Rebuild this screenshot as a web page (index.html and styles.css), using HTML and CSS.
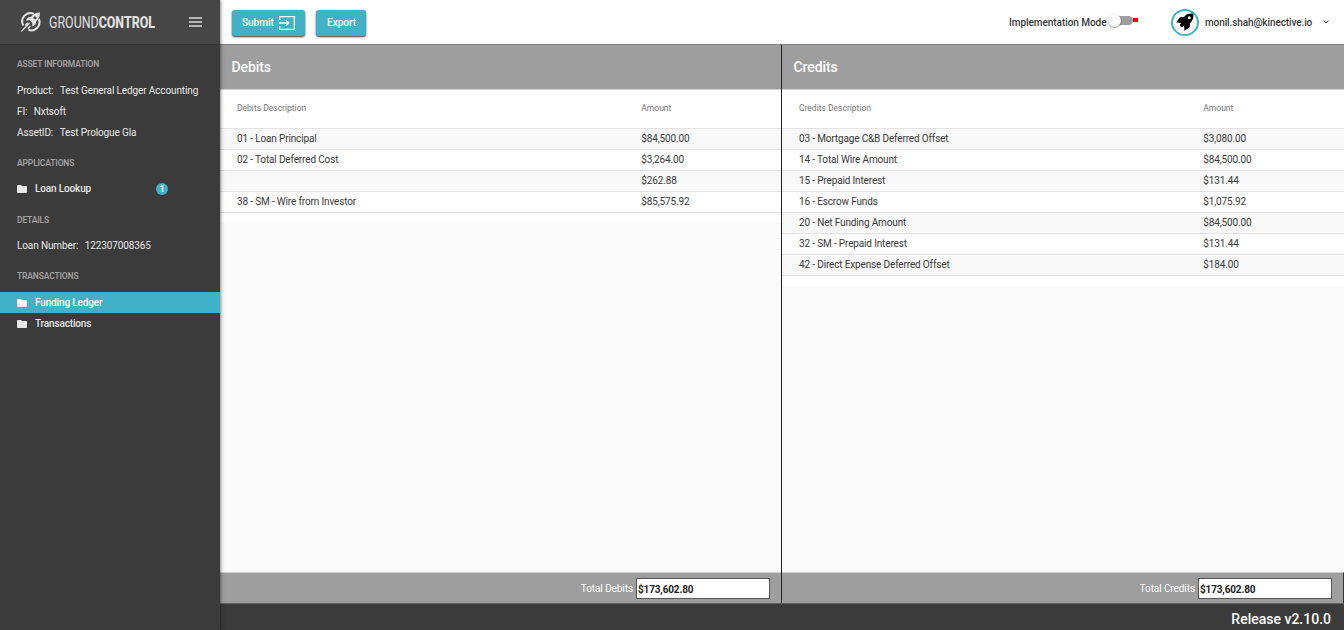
FILE: index.html
```
<!DOCTYPE html>
<html lang="en">
<head>
<meta charset="utf-8">
<title>Ground Control</title>
<link rel="stylesheet" href="styles.css">
</head>
<body>
<div class="app">
  <aside class="sidebar">
    <div class="brand">
      <svg class="brand-mark" viewBox="0 0 22 22">
        <path class="ring" d="M3.400 14.500A8.200 8.200 0 0 1 13.800 2.800M18.900 8A8.200 8.200 0 0 1 8.500 18.800"/>
        <path class="ship" d="M20 1.500c-3.700-.2-6.300 1-8.600 4L7.900 6.500 5.800 9.500l3.700-.2 2.900 2.700-.1 3.800 3.300-2.500.6-3c2.900-2.400 4-5.200 3.800-8.800Z"/>
        <path class="trail" d="M1.300 20.500 9.500 12M5.300 14.300l2.500-2.500M7.800 17.500l2.700-2.500"/>
        <circle class="port" cx="15" cy="6.700" r="1.500"/>
      </svg>
      <svg class="wordmark" viewBox="0 0 107 20">
        <text x="0" y="16" textLength="106" lengthAdjust="spacingAndGlyphs">GROUND<tspan class="word-bold">CONTROL</tspan></text>
      </svg>
      <svg class="burger" viewBox="0 0 13 10"><path d="M0 1h13M0 5h13M0 9h13"/></svg>
    </div>
    <nav class="side-nav">
      <h2>ASSET INFORMATION</h2>
      <p>Product:<span>Test General Ledger Accounting</span></p>
      <p>FI:<span>Nxtsoft</span></p>
      <p>AssetID:<span>Test Prologue Gla</span></p>
      <h2>APPLICATIONS</h2>
      <a><svg class="folder" viewBox="0 0 10 8"><path d="M1 0h3l1 1h4a1 1 0 0 1 1 1v5a1 1 0 0 1-1 1H1a1 1 0 0 1-1-1V1a1 1 0 0 1 1-1Z"/></svg>Loan Lookup<b class="badge">1</b></a>
      <h2>DETAILS</h2>
      <p>Loan Number:<span>122307008365</span></p>
      <h2>TRANSACTIONS</h2>
      <a class="active"><svg class="folder" viewBox="0 0 10 8"><path d="M1 0h3l1 1h4a1 1 0 0 1 1 1v5a1 1 0 0 1-1 1H1a1 1 0 0 1-1-1V1a1 1 0 0 1 1-1Z"/></svg>Funding Ledger</a>
      <a><svg class="folder" viewBox="0 0 10 8"><path d="M1 0h3l1 1h4a1 1 0 0 1 1 1v5a1 1 0 0 1-1 1H1a1 1 0 0 1-1-1V1a1 1 0 0 1 1-1Z"/></svg>Transactions</a>
    </nav>
  </aside>
  <div class="main">
    <header class="toolbar">
      <button class="btn submit">Submit
        <svg class="submit-icon" viewBox="0 0 16 14"><path d="M.7 4V.7h14.600v12.600H.7V10M0 7h9.500M7 4.300 9.700 7 7 9.700"/></svg>
      </button>
      <button class="btn export">Export</button>
      <span class="mode">Implementation Mode</span>
      <span class="toggle"><i class="knob"></i></span><i class="mark"></i>
      <span class="avatar"><svg viewBox="0 0 20 20"><path d="M18.300 1.700c-4.200-.5-7.100.6-9.500 3.300l-3.300.2c-.6 0-1 .3-1.300.8L1.300 10.700c1.700-.2 3.400-.1 4.700.6L4.800 13c.3 1.100 1.100 1.900 2.200 2.200l1.700-1.200c.7 1.300.8 3 .6 4.700l4.700-2.900c.5-.3.800-.7.8-1.300l.2-3.300c2.700-2.400 3.800-5.300 3.300-9.500ZM14.300 7.200a1.500 1.500 0 1 1 0-3 1.500 1.500 0 0 1 0 3Z"/></svg></span>
      <span class="email">monil.shah@kinective.io</span>
      <svg class="chevron" viewBox="0 0 6 4"><path d="M.5.700 3 3 5.500.7"/></svg>
    </header>
    <div class="panels">
      <section class="panel debits">
        <h1>Debits</h1>
        <div class="sheet">
          <div class="row head"><span>Debits Description</span><span>Amount</span></div>
          <div class="row"><span>01 - Loan Principal</span><span>$84,500.00</span></div>
          <div class="row"><span>02 - Total Deferred Cost</span><span>$3,264.00</span></div>
          <div class="row"><span></span><span>$262.88</span></div>
          <div class="row"><span>38 - SM - Wire from Investor</span><span>$85,575.92</span></div>
        </div>
        <div class="total"><span>Total Debits</span><div class="field">$173,602.80</div></div>
      </section>
      <section class="panel credits">
        <h1>Credits</h1>
        <div class="sheet">
          <div class="row head"><span>Credits Description</span><span>Amount</span></div>
          <div class="row"><span>03 - Mortgage C&amp;B Deferred Offset</span><span>$3,080.00</span></div>
          <div class="row"><span>14 - Total Wire Amount</span><span>$84,500.00</span></div>
          <div class="row"><span>15 - Prepaid Interest</span><span>$131.44</span></div>
          <div class="row"><span>16 - Escrow Funds</span><span>$1,075.92</span></div>
          <div class="row"><span>20 - Net Funding Amount</span><span>$84,500.00</span></div>
          <div class="row"><span>32 - SM - Prepaid Interest</span><span>$131.44</span></div>
          <div class="row"><span>42 - Direct Expense Deferred Offset</span><span>$184.00</span></div>
        </div>
        <div class="total"><span>Total Credits</span><div class="field">$173,602.80</div></div>
      </section>
    </div>
    <footer class="footer">Release v2.10.0</footer>
  </div>
</div>
</body>
</html>
```
FILE: styles.css
```
* { box-sizing: border-box; }
body { margin: 0; font-family: Roboto, "Liberation Sans", sans-serif; font-size: 10px; color: #3a3a3a; }
.app { display: flex; width: 1344px; height: 630px; overflow: hidden; }

.sidebar { width: 220px; flex: none; background: #3b3b3b; color: #e8e8e8; box-shadow: 0 0 4px rgba(0,0,0,.7); z-index: 1; }
.brand { height: 45px; background: #464646; border-bottom: 1px solid #2f2f2f; display: flex; align-items: center; padding-left: 20px; }
.brand-mark { width: 22px; height: 22px; }
.ring { fill: none; stroke: #e6e6e6; stroke-width: 2; }
.trail { fill: none; stroke: #e6e6e6; stroke-width: 1.300; }
.ship { fill: #e6e6e6; }
.port { fill: #464646; }
.wordmark { width: 107px; height: 20px; margin-left: 7px; }
.wordmark text { fill: #e0e0e0; font-size: 16.500px; font-weight: 400; }
.wordmark .word-bold { font-weight: 800; }
.burger { width: 13px; height: 10px; margin-left: 33px; stroke: #dcdcdc; stroke-width: 1.400; }
.side-nav h2 { margin: 0; padding: 14px 0 0 17px; height: 35px; font-size: 8.500px; line-height: 11px; font-weight: 600; letter-spacing: -.15px; color: #a0a0a0; }
.side-nav h2:not(:first-child) { padding-top: 15px; height: 36px; }
.side-nav p { margin: 0; height: 21px; line-height: 21px; padding-left: 17px; letter-spacing: -.12px; }
.side-nav p span { margin-left: 6.500px; }
.side-nav a { display: flex; align-items: center; height: 21px; padding-left: 17px; font-weight: 500; letter-spacing: -.15px; }
.side-nav h2 + a:not(.active) { margin-top: -1px; }
.side-nav a + h2:not(:first-child) { padding-top: 16px; }
.side-nav .active { background: #40b1c7; color: #fff; }
.folder { width: 10px; height: 8px; margin: 1px 8px 0 0; fill: currentColor; }
.badge { width: 12px; height: 12px; border-radius: 50%; background: #40b1c7; color: #fff; font-size: 9px; line-height: 12px; text-align: center; margin-left: 65px; }

.main { flex: 1; min-width: 0; display: flex; flex-direction: column; }
.toolbar { height: 45px; flex: none; background: #fff; border-bottom: 1px solid #808080; display: flex; align-items: center; padding-left: 12px; }
.btn { height: 26px; border: 0; border-radius: 3px; background: #40b1c7; color: #fff; font: 500 10px Roboto, sans-serif; padding: 0 0 1px 11px; display: flex; align-items: center; flex: none; box-shadow: 0 1px 2px rgba(0,0,0,.8); margin-top: 2px; }
.submit { width: 73px; padding-left: 10px; }
.export { width: 50px; margin-left: 11px; }
.submit-icon { width: 16px; height: 14px; margin-left: 5px; fill: none; stroke: #fff; stroke-width: 1.300; }
.mode { margin-left: 643px; width: 100px; flex: none; font-weight: 500; letter-spacing: -.05px; white-space: nowrap; }
.toggle { width: 24px; height: 9px; flex: none; border-radius: 5px; background: #9e9e9e; margin-top: -4px; }
.knob { display: block; width: 13px; height: 13px; border-radius: 50%; background: #fafafa; box-shadow: 0 1px 2px rgba(0,0,0,.4); margin: -2px 0 0 -1px; }
.mark { width: 5px; height: 4px; background: #f00; margin-top: -4px; }
.avatar { width: 28px; height: 27px; flex: none; border: 2px solid #40b1c7; border-radius: 50%; margin-left: 33px; display: flex; align-items: center; justify-content: center; }
.avatar svg { width: 20px; height: 20px; fill: #000; flex: none; }
.email { margin-left: 6px; width: 118px; font-weight: 500; letter-spacing: -.1px; white-space: nowrap; }
.chevron { width: 6px; height: 4px; fill: none; stroke: #333; }

.panels { flex: 1; display: flex; }
.panel { flex: none; width: 562px; display: flex; flex-direction: column; background: #fafafa; }
.debits { border-right: 1px solid #222; }
.panel h1 { margin: 0; height: 45px; background: #9e9e9e; border-bottom: 1px solid #d0d0d0; color: #fff; font-size: 14px; font-weight: 500; letter-spacing: -.1px; line-height: 45px; padding-left: 11.500px; }
.sheet { background: #fff; padding-bottom: 10px; }
.row { display: grid; grid-template-columns: 404.300px 1fr; height: 21px; line-height: 19px; padding-left: 17px; border-bottom: 1px solid #e2e2e2; letter-spacing: -.15px; }
.row:nth-child(even) { background: #f8f8f8; }
.head { height: 39px; line-height: 37px; color: #757575; font-size: 8.500px; letter-spacing: 0; }
.total { height: 31px; margin-top: auto; background: #9e9e9e; border-top: 1px solid #d0d0d0; display: flex; align-items: center; justify-content: flex-end; padding: 1px 11px 0 0; color: #fff; letter-spacing: -.08px; }
.credits .total { border-right: 1px solid #333; }
.field { width: 134px; height: 21px; margin-left: 3px; border: 1px solid #555; background: #fff; color: #222; font-weight: 700; letter-spacing: -.15px; line-height: 21px; padding-left: 1px; }
.footer { height: 27px; background: #3b3b3b; border-top: 1px solid #606060; color: #fff; font-size: 14px; font-weight: 500; line-height: 30px; text-align: right; padding-right: 13px; }
```
